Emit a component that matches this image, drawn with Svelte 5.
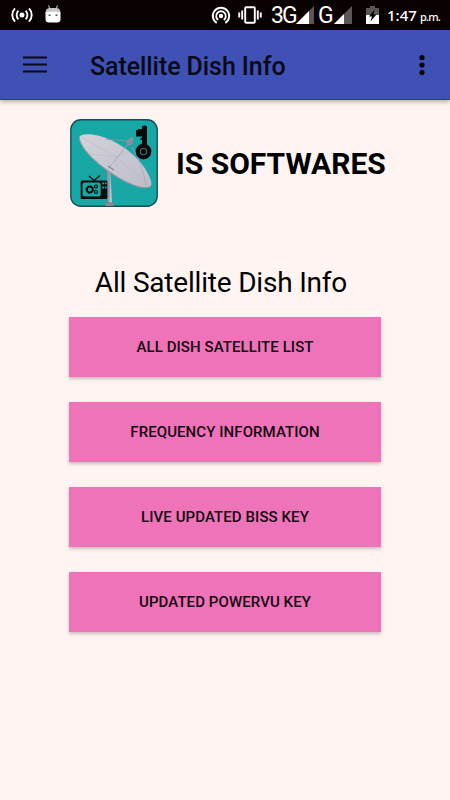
<script>
    let title = "Satellite Dish Info";
    let items = [
        "All Dish Satellite List",
        "Frequency Information",
        "Live Updated Biss Key",
        "Updated PowerVu Key"
    ];
</script>

<main>
    <div class="status">
        <div class="left">
            <svg width="24" height="16" viewBox="0 0 24 16" fill="none" stroke="#fff" stroke-width="1.9">
                <circle cx="12" cy="8" r="2.5" fill="#fff" stroke="none" />
                <path d="M8.400 3.800a5.800 5.800 0 0 0 0 8.400M15.600 3.800a5.800 5.800 0 0 1 0 8.400M5 1.400a9.400 9.400 0 0 0 0 13.200M19 1.400a9.400 9.400 0 0 1 0 13.200" />
            </svg>
            <svg class="droid" width="16" height="18" viewBox="0 0 16 18">
                <path d="M3.500 0.500L5 4M12.500 0.500L11 4" stroke="#aaa" stroke-width="1.200" />
                <path d="M.5 8Q.5 3 5 3h6q4.500 0 4.500 5z" fill="#c4c4c4" />
                <path d="M.5 7.500q7.500-2 15 0V14q0 3.500-3.500 3.500H4Q.5 17.500.5 14z" fill="#fff" />
                <path d="M3.500 9.500h2v1.500h-2zM10.500 9.500h2v1.500h-2z" fill="#555" />
            </svg>
        </div>
        <div class="right">
            <svg class="hotspot" width="20" height="18" viewBox="0 0 20 18" fill="none" stroke="#fff" stroke-width="1.900">
                <circle cx="10" cy="10" r="2.200" fill="#fff" stroke="none" />
                <path d="M7.200 14a4.800 4.800 0 1 1 5.600 0M5.700 16.900a8.200 8.200 0 1 1 8.600 0" />
            </svg>
            <svg class="vibrate" width="24" height="18" viewBox="0 0 24 18" fill="none" stroke="#fff" stroke-width="1.900">
                <rect x="7.200" y="1.300" width="9.600" height="15.400" rx="1" />
                <path d="M4.200 4.500v9M19.800 4.500v9M1.200 6.500v5M22.800 6.500v5" />
            </svg>
            <span class="net three">3G</span>
            <svg width="18" height="18" viewBox="0 0 18 18">
                <path d="M0 18L18 0V18z" fill="#5c5657" />
                <path d="M0 18L13 5V18z" fill="#fff" />
            </svg>
            <span class="net">G</span>
            <svg width="18" height="18" viewBox="0 0 18 18">
                <path d="M0 18L18 0V18z" fill="#5c5657" />
                <path d="M0 18L10 8V18z" fill="#fff" />
            </svg>
            <svg class="battery" width="13" height="18" viewBox="0 0 13 18">
                <path d="M4 0h5v2h4v7H0V2h4z" fill="#5c5657" />
                <path d="M0 9h13v9H0z" fill="#fff" />
                <path d="M8.500 3.500L3 10.500h3L4.500 15.500 10.500 8.500h-3z" fill="#0a0202" />
            </svg>
            <span class="time">1:47</span>
            <span class="pm">p.m.</span>
        </div>
    </div>

    <header>
        <svg width="24" height="18" viewBox="0 0 24 18">
            <path d="M0 1.500h24M0 8.500h24M0 15.500h24" stroke="#080a14" stroke-width="2.200" />
        </svg>
        <h1>{title}</h1>
        <svg width="6" height="22" viewBox="0 0 6 22" fill="#050505">
            <circle cx="3" cy="3.500" r="2.600" />
            <circle cx="3" cy="11" r="2.600" />
            <circle cx="3" cy="18.500" r="2.600" />
        </svg>
    </header>

    <div class="brand">
        <svg width="88" height="88" viewBox="0 0 88 88">
            <defs>
                <linearGradient id="dish" x1="0" y1="0" x2="1" y2="1">
                    <stop offset="0" stop-color="#d3d2da" />
                    <stop offset="1" stop-color="#bdbdca" />
                </linearGradient>
            </defs>
            <rect x="0.800" y="0.800" width="86.400" height="86.400" rx="10" fill="#17a7a5" stroke="#164c59" stroke-width="1.400" />
            <!-- mast -->
            <path d="M37 50L41 53V86H38z" fill="#8b9da8" />
            <path d="M40.500 54L42 86H39.500z" fill="#c3c7cf" />
            <path d="M35.500 84q4-2 8 0v3h-8z" fill="#8b8792" />
            <path d="M36 50l-4 8" stroke="#6e8289" />
            <!-- reflector -->
            <path d="M9.500 17.500C14 13 31 16 42 21.500C56 28.500 67 38 74 48C80 57 83 65 80.500 67.500C74 71 60 65.500 48 58.500C34 50 22 40 15 31C11 25 8.500 20 9.500 17.500z" fill="url(#dish)" />
            <path d="M9.500 17.500C8.500 20 11 25 15 31C22 40 34 50 48 58.500C60 65.500 74 71 80.500 67.500" fill="none" stroke="#9993a0" stroke-width="1.100" />
            <path d="M11 18L46 38L80 66M46 38L20 35M46 38L60 33M46 38L48 57" stroke="#b7b6c1" stroke-width="0.500" fill="none" />
            <path d="M36 20l22 2" stroke="#6f9da4" stroke-width="1.200" />
            <path d="M58 25L38 50M62 28Q73 46 76 67" stroke="#aaa8b2" stroke-width="0.800" fill="none" />
            <path d="M38 47l6 4" stroke="#77717d" stroke-width="1" />
            <path d="M55.500 23l3 4 3-1 2.500-6-2.500-2.500z" fill="#87929d" />
            <!-- key -->
            <path d="M72 7.500q2.500-2 5 0V26h-5v-5h-1.500v-2H72v-1.500h-6V11h2V10h4z" fill="#050a0b" />
            <circle cx="73.500" cy="32.500" r="7.900" fill="#050a0b" />
            <circle cx="73.500" cy="32.500" r="3.200" fill="none" stroke="#48717a" stroke-width="1.100" />
            <!-- television -->
            <path d="M19 57l5 4.500 6-5" fill="none" stroke="#07191a" stroke-width="1.400" />
            <rect x="10.700" y="61.500" width="26.600" height="18.500" rx="1.500" fill="#040909" />
            <rect x="12.500" y="63.500" width="18.200" height="14" rx="2" fill="#17a7a5" />
            <circle cx="19.800" cy="70.500" r="2.900" fill="none" stroke="#040909" stroke-width="1.700" />
            <circle cx="19.800" cy="70.500" r="3.900" fill="none" stroke="#040909" stroke-width="0.900" stroke-dasharray="1.500 1.500" />
            <circle cx="26" cy="67.500" r="1.500" fill="none" stroke="#040909" stroke-width="1.200" />
            <circle cx="26" cy="73" r="1.500" fill="none" stroke="#040909" stroke-width="1.200" />
            <path d="M32.200 63.500h1.800v1.800h-1.800zM34.800 63.500h1.800v1.800h-1.800zM32.200 67.500h1.800v2h-1.800zM34.800 67.500h1.800v2h-1.800z" fill="#17a7a5" />
        </svg>
        <h2>IS SOFTWARES</h2>
    </div>

    <h3>All Satellite Dish Info</h3>

    <div class="buttons">
        {#each items as item}
            <button>{item}</button>
        {/each}
    </div>
</main>

<style>
    :global(body) {
        background-color: #fff4f2;
    }

    main {
        width: 450px;
        height: 800px;
        overflow: hidden;
        font-family: Roboto, sans-serif;
        color: #000;
        background-color: #fff4f2;
    }

    svg {
        display: block;
        flex-shrink: 0;
    }

    h1, h2, h3 {
        margin: 0;
        white-space: nowrap;
    }

    .status {
        display: flex;
        justify-content: space-between;
        height: 30px;
        box-sizing: border-box;
        padding: 0 11px 0 10px;
        color: #fff;
        background-color: #0a0202;
    }

    .left, .right {
        display: flex;
        align-items: center;
    }

    .droid {
        margin: 0 0 3px 11px;
    }

    .hotspot {
        margin-right: 7px;
    }

    .vibrate {
        margin-right: 9px;
    }

    .net {
        width: 16px;
        margin-left: 4px;
        padding-top: 1px;
        font-size: 23px;
        line-height: 29px;
        letter-spacing: -2px;
    }

    .three {
        width: 25px;
        margin-left: 0;
    }

    .battery {
        margin: 0 8px 0 14px;
    }

    .time {
        width: 33px;
        font-family: "Noto Sans", sans-serif;
        font-size: 15px;
        font-weight: 500;
        line-height: 30px;
    }

    .pm {
        width: 19px;
        padding-top: 3px;
        font-family: "Noto Sans", sans-serif;
        font-size: 11px;
        font-weight: 500;
        letter-spacing: -0.8px;
    }

    header {
        position: relative;
        display: flex;
        align-items: center;
        height: 70px;
        box-sizing: border-box;
        padding: 0 25px 0 23px;
        border-bottom: 1px solid #203ea5;
        background-color: #3f51b5;
        box-shadow: 0 2px 4px rgba(70, 40, 30, 0.35);
    }

    h1 {
        flex: 1;
        margin-left: 43px;
        padding-top: 3px;
        font-size: 25px;
        font-weight: 500;
        letter-spacing: -0.08px;
        color: #080a14;
    }

    .brand {
        display: flex;
        align-items: center;
        gap: 18px;
        margin: 19px 0 0 70px;
    }

    h2 {
        font-size: 30px;
        font-weight: 700;
    }

    h3 {
        margin-top: 58px;
        padding-right: 8px;
        text-align: center;
        font-size: 28px;
        font-weight: 400;
        line-height: 36px;
        letter-spacing: -0.2px;
    }

    .buttons {
        display: flex;
        flex-direction: column;
        gap: 25px;
        width: 312px;
        margin: 16px 0 0 69px;
    }

    button {
        height: 60px;
        padding: 0;
        border: none;
        font-family: inherit;
        font-size: 15px;
        font-weight: 500;
        letter-spacing: 0.08px;
        text-transform: uppercase;
        color: #140610;
        background-color: #ef73b8;
        box-shadow: 0 2px 3px rgba(90, 60, 60, 0.3);
    }
</style>
